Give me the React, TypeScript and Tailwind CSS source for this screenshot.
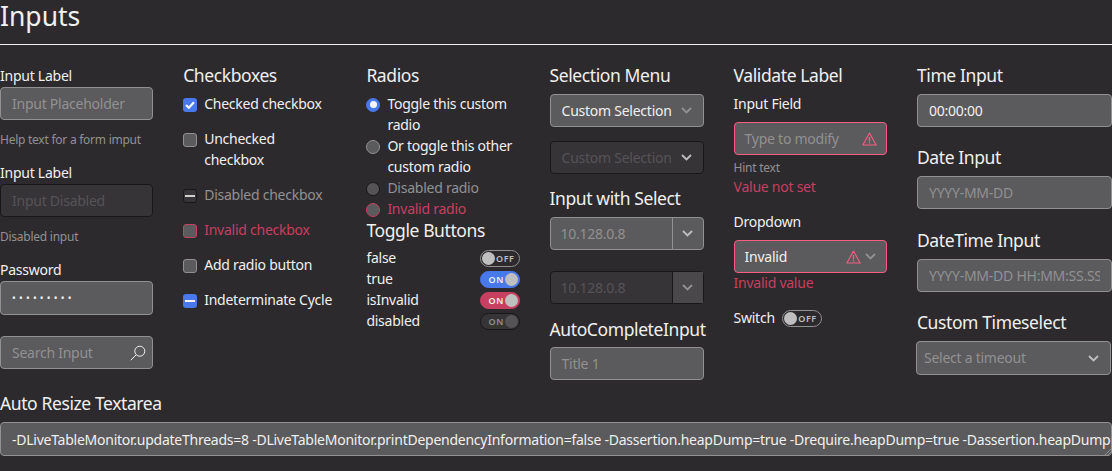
import type { ReactNode } from "react";

const inputBase = "h-[33px] w-full rounded-[4px] border border-[#929192] bg-[#5b5a5c] px-[11px] flex items-center text-[14px]";
const disabledBase = "h-[33px] w-full rounded-[4px] border border-[#1a171a] bg-[#373438] px-[11px] flex items-center text-[14px]";

const Heading = ({ children, className = "" }: { children: ReactNode, className?: string }) => (
  <div className={`text-[17.5px] leading-[21px] tracking-[-0.4px] text-[#f0f0ee] ${className}`}>
    <div className="-translate-y-px">{children}</div>
  </div>
);

const Label = ({ children, className = "" }: { children: ReactNode, className?: string }) => (
  <div className={`text-[14px] leading-[21px] text-[#f0f0ee] ${className}`}>
    <div className="-translate-y-px">{children}</div>
  </div>
);

const Chevron = ({ className = "" }: { className?: string }) => (
  <svg viewBox="0 0 11 7" className={`h-[7px] w-[11px] shrink-0 ${className}`} fill="none" stroke="currentColor" strokeWidth="1.8">
    <path d="M1 1l4.5 4.5L10 1" />
  </svg>
);

const Warning = () => (
  <svg viewBox="0 0 15 14" className="h-[14px] w-[15px] shrink-0 text-[#f95d84]" fill="none" stroke="currentColor" strokeWidth="1.1">
    <path d="M7.5 1 .9 13h13.2z" strokeLinejoin="round" />
    <path d="M7.5 5v4.4M7.5 10.2v1.4" strokeWidth="1.4" />
  </svg>
);

type CheckState = "checked" | "empty" | "disabled" | "invalid" | "indeterminate";

const Check = ({ state }: { state: CheckState }) => {
  if (state === "checked") {
    return (
      <span className="flex h-[14px] w-[14px] shrink-0 items-center justify-center rounded-[3px] bg-[#4878ea]">
        <svg viewBox="0 0 10 8" className="h-[8px] w-[10px]" fill="none" stroke="#f5f5f5" strokeWidth="2.2"><path d="m1 4 2.8 2.8L9 1.2" /></svg>
      </span>
    );
  }
  if (state === "indeterminate") {
    return (
      <span className="flex h-[14px] w-[14px] shrink-0 items-center justify-center rounded-[3px] bg-[#4878ea]">
        <span className="h-[2px] w-[10px] bg-[#f5f5f5]" />
      </span>
    );
  }
  if (state === "disabled") {
    return (
      <span className="flex h-[14px] w-[14px] shrink-0 items-center justify-center rounded-[3px] border border-[#1a171a] bg-[#373438]">
        <span className="h-[2px] w-[10px] bg-[#d0d0ce]" />
      </span>
    );
  }
  const border = state === "invalid" ? "border-[#c73f61]" : "border-[#929192]";
  return <span className={`h-[14px] w-[14px] shrink-0 rounded-[3px] border bg-[#5b5a5c] ${border}`} />;
};

const CheckRow = ({ state, text, color = "text-[#f0f0ee]" }: { state: CheckState, text: string, color?: string }) => (
  <div className={`mb-[14px] flex gap-[7px] text-[14px] leading-[21px] ${color}`}>
    <span className="flex h-[21px] items-center"><Check state={state} /></span>
    <span className="-translate-y-px">{text}</span>
  </div>
);

const Radio = ({ children, color = "text-[#f0f0ee]", dot = "border-[#929192] bg-[#5b5a5c]", on = false }: { children: ReactNode, color?: string, dot?: string, on?: boolean }) => (
  <div className={`flex gap-[7px] text-[14px] leading-[21px] ${color}`}>
    <span className="flex h-[21px] items-center">
      <span className={`flex h-[14px] w-[14px] items-center justify-center rounded-full border ${dot}`}>
        {on && <span className="h-[7px] w-[7px] rounded-full bg-[#f5f5f5]" />}
      </span>
    </span>
    <span className="-translate-y-px">{children}</span>
  </div>
);

type ToggleVariant = "off" | "blue" | "red" | "disabled";

const Toggle = ({ on, variant }: { on: boolean, variant: ToggleVariant }) => {
  const track = {
    off: "border-[#929192] bg-[#2d2a2e] text-[#c0bfbf]",
    blue: "border-[#4878ea] bg-[#4878ea] text-[#f0f0ee]",
    red: "border-[#c73f61] bg-[#c73f61] text-[#f0f0ee]",
    disabled: "border-[#1a171a] bg-[#373438] text-[#929192]",
  }[variant];
  const knob = variant === "disabled" ? "bg-[#555356]" : "bg-[#c0bfbf]";
  return (
    <span className={`flex h-[17px] w-[40px] shrink-0 items-center justify-between rounded-full border text-[9px] font-semibold tracking-[0.6px] ${track} ${on ? "pl-[8px] pr-[1px]" : "pl-[1px] pr-[4px]"}`}>
      {!on && <span className={`h-[13px] w-[13px] rounded-full ${knob}`} />}
      <span>{on ? "ON" : "OFF"}</span>
      {on && <span className={`h-[13px] w-[13px] rounded-full ${knob}`} />}
    </span>
  );
};

const ToggleRow = ({ name, on, variant }: { name: string, on: boolean, variant: ToggleVariant }) => (
  <div className="flex h-[21px] items-center justify-between text-[14px] text-[#f0f0ee]">
    <span className="-translate-y-px">{name}</span>
    <Toggle on={on} variant={variant} />
  </div>
);

const InputGroup = ({ disabled }: { disabled?: boolean }) => (
  <div className={`flex h-[33px] w-full rounded-[4px] border text-[14px] ${disabled ? "border-[#1a171a] bg-[#373438] text-[#555356]" : "border-[#929192] bg-[#5b5a5c] text-[#929192]"}`}>
    <span className="flex flex-1 items-center pl-[10px]">10.128.0.8</span>
    <span className={`flex w-[31px] items-center justify-center border-l ${disabled ? "border-[#1a171a] bg-[#4a484b] text-[#929192]" : "border-[#929192] text-[#c0bfbf]"}`}>
      <Chevron />
    </span>
  </div>
);

const App = () => {
  return (
    <div className="h-[471px] w-[1112px] overflow-hidden bg-[#2d2a2e] font-['Noto_Sans',sans-serif] tracking-[-0.25px] text-[#f0f0ee]">
      <h1 className="h-[34px] -translate-y-px text-[26.5px] leading-[34px] tracking-[0px]">Inputs</h1>
      <div className="mt-[10px] h-px w-full bg-[#f0f0ee]" />

      <div className="mt-[21px] grid grid-cols-[153.2px_153.2px_153.2px_154px_153.4px_minmax(0,1fr)] gap-x-[30px]">
        {/* Plain inputs */}
        <div>
          <Label>Input Label</Label>
          <div className={`${inputBase} text-[#929192]`}>Input Placeholder</div>
          <div className="mt-[11px] text-[12px] leading-[18px] text-[#929192]">Help text for a form imput</div>
          <Label className="mt-[14px]">Input Label</Label>
          <div className={`${disabledBase} text-[#555356]`}>Input Disabled</div>
          <div className="mt-[11px] text-[12px] leading-[18px] text-[#929192]">Disabled input</div>
          <Label className="mt-[14px]">Password</Label>
          <div className={`${inputBase} h-[34px] text-[#f0f0ee]`}>
            <span className="text-[10px] tracking-[3.2px]">•••••••••</span>
          </div>
          <div className={`${inputBase} mt-[21px] justify-between pr-[6px] text-[#929192]`}>
            <span>Search Input</span>
            <svg viewBox="0 0 16 16" className="h-[16px] w-[16px] text-[#f0f0ee]" fill="none" stroke="currentColor" strokeWidth="1">
              <circle cx="9.8" cy="6.2" r="5" />
              <path d="M6.2 9.8.8 15.2" />
            </svg>
          </div>
        </div>

        {/* Checkboxes */}
        <div>
          <Heading className="mb-[7px]">Checkboxes</Heading>
          <CheckRow state="checked" text="Checked checkbox" />
          <CheckRow state="empty" text="Unchecked checkbox" />
          <CheckRow state="disabled" text="Disabled checkbox" color="text-[#929192]" />
          <CheckRow state="invalid" text="Invalid checkbox" color="text-[#c73f61]" />
          <CheckRow state="empty" text="Add radio button" />
          <CheckRow state="indeterminate" text="Indeterminate Cycle" />
        </div>

        {/* Radios and toggles */}
        <div>
          <Heading className="mb-[7px]">Radios</Heading>
          <Radio on dot="border-[#4878ea] bg-[#4878ea]">Toggle this custom radio</Radio>
          <Radio>Or toggle this other custom radio</Radio>
          <Radio color="text-[#929192]" dot="border-[#1a171a] bg-[#555356]">Disabled radio</Radio>
          <Radio color="text-[#c73f61]" dot="border-[#c73f61] bg-[#5b5a5c]">Invalid radio</Radio>
          <Heading className="mb-[6px] mt-[1px]">Toggle Buttons</Heading>
          <ToggleRow name="false" on={false} variant="off" />
          <ToggleRow name="true" on variant="blue" />
          <ToggleRow name="isInvalid" on variant="red" />
          <ToggleRow name="disabled" on variant="disabled" />
        </div>

        {/* Selects */}
        <div>
          <Heading className="mb-[7px]">Selection Menu</Heading>
          <div className={`${inputBase} justify-between text-[#f0f0ee]`}>
            <span>Custom Selection</span><Chevron className="text-[#929192]" />
          </div>
          <div className={`${disabledBase} mt-[14px] justify-between text-[#555356]`}>
            <span>Custom Selection</span><Chevron className="text-[#c0bfbf]" />
          </div>
          <Heading className="mb-[7px] mt-[15px]">Input with Select</Heading>
          <InputGroup />
          <div className="mt-[21px]"><InputGroup disabled /></div>
          <Heading className="mb-[6px] mt-[16px]">AutoCompleteInput</Heading>
          <div className={`${inputBase} text-[#929192]`}>Title 1</div>
        </div>

        {/* Validation */}
        <div>
          <Heading className="mb-[7px]">Validate Label</Heading>
          <Label className="mb-[7px]">Input Field</Label>
          <div className="flex h-[33px] w-full items-center justify-between rounded-[4px] border border-[#f95d84] bg-[#5b5a5c] pl-[10px] pr-[9px] text-[14px] text-[#929192]">
            <span>Type to modify</span><Warning />
          </div>
          <div className="mt-[4px] text-[12px] leading-[18px] text-[#929192]">Hint text</div>
          <Label className="!text-[#c73f61]">Value not set</Label>
          <Label className="mb-[7px] mt-[14px]">Dropdown</Label>
          <div className="flex h-[33px] w-full items-center rounded-[4px] border border-[#f95d84] bg-[#5b5a5c] pl-[10px] pr-[10px] text-[14px] text-[#f0f0ee]">
            <span className="flex-1">Invalid</span><Warning /><Chevron className="ml-[4px] text-[#929192]" />
          </div>
          <Label className="!text-[#c73f61]">Invalid value</Label>
          <div className="mt-[14px] flex h-[21px] items-center gap-[7px] text-[14px]">
            <span className="-translate-y-px">Switch</span><Toggle on={false} variant="off" />
          </div>
        </div>

        {/* Date and time */}
        <div className="min-w-0">
          <Heading className="mb-[7px]">Time Input</Heading>
          <div className={`${inputBase} text-[#f0f0ee]`}>00:00:00</div>
          <Heading className="mb-[7px] mt-[21px]">Date Input</Heading>
          <div className={`${inputBase} text-[#929192]`}>YYYY-MM-DD</div>
          <Heading className="mb-[7px] mt-[22px]">DateTime Input</Heading>
          <div className={`${inputBase} text-[#929192]`}>
            <span className="min-w-0 overflow-hidden whitespace-nowrap">YYYY-MM-DD HH:MM:SS.SSSSSSSSS</span>
          </div>
          <Heading className="mb-[7px] mt-[21px]">Custom Timeselect</Heading>
          <div className={`${inputBase} -ml-px h-[34px] w-[calc(100%+1px)] justify-between pl-[7px] text-[#929192]`}>
            <span className="-translate-y-px">Select a timeout</span><Chevron className="text-[#c0bfbf]" />
          </div>
        </div>
      </div>

      <Heading className="mt-[14px]">Auto Resize Textarea</Heading>
      <div className={`${inputBase} relative mt-[7px] h-[34px] overflow-hidden whitespace-nowrap text-[#f0f0ee]`}>
        -DLiveTableMonitor.updateThreads=8 -DLiveTableMonitor.printDependencyInformation=false -Dassertion.heapDump=true -Drequire.heapDump=true -Dassertion.heapDump=true
        {/* resize handle */}
        <svg viewBox="0 0 6 6" className="absolute bottom-0 right-0 h-[6px] w-[6px] bg-[#5b5a5c]" stroke="#929192" strokeWidth="1">
          <path d="M6 0 0 6M6 3 3 6" />
        </svg>
      </div>
    </div>
  );
};

export default App;
